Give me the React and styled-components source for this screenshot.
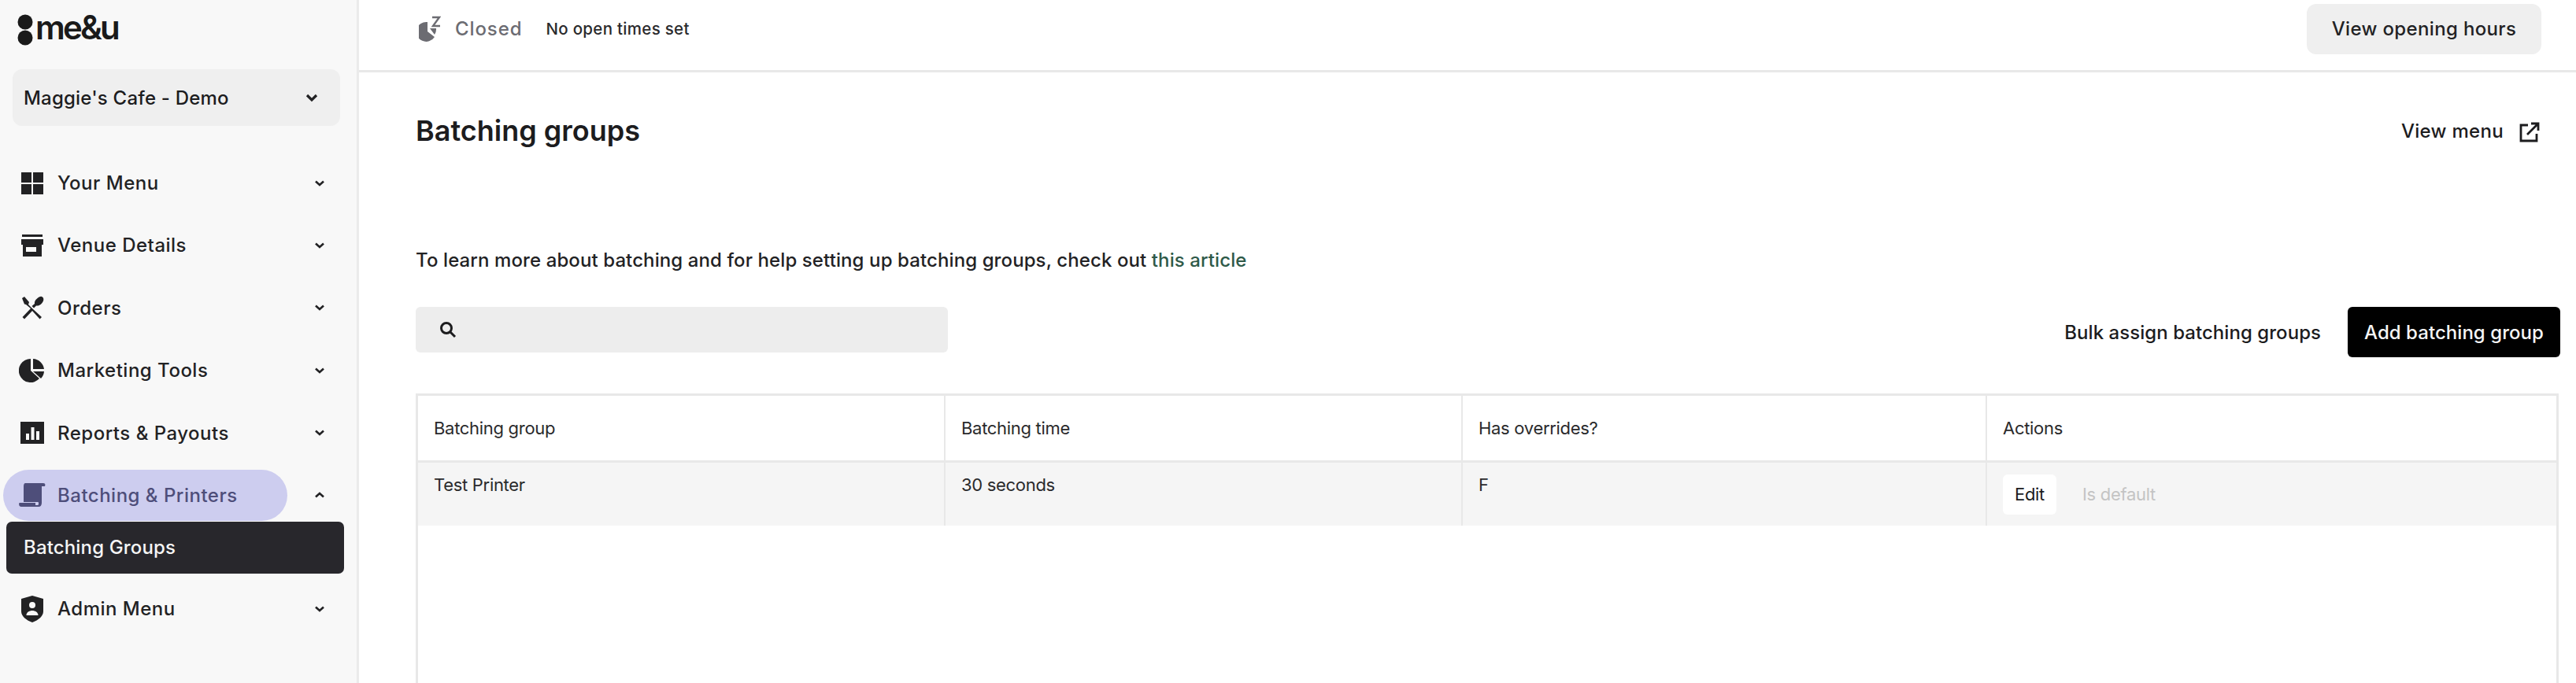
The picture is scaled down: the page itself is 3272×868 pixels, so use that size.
import React from "react";
import styled, { createGlobalStyle } from "styled-components";

const Global = createGlobalStyle`
  html, body { margin: 0; height: 100%; background: #fff; overflow: hidden; }
  body { font-family: Inter, "Noto Sans", sans-serif; color: #1c1c1e; }
  #root { height: 100%; }
  * { box-sizing: border-box; }
`;

const Page = styled.div`
  display: flex;
  width: 3272px;
  height: 868px;
  overflow: hidden;
`;

const Sidebar = styled.aside`
  width: 456px;
  flex-shrink: 0;
  background: #f8f8f8;
  border-right: 3px solid #ebebeb;
  padding: 18px 0 0;
`;

const Logo = styled.div`
  display: flex;
  align-items: center;
  gap: 3px;
  height: 40px;
  padding-left: 22px;
`;

const LogoText = styled.span`
  font-size: 42px;
  line-height: 40px;
  font-weight: 600;
  letter-spacing: -2.8px;
  color: #1a1a1a;
  margin-top: -6px;
`;

const VenueSelect = styled.div`
  display: flex;
  align-items: center;
  justify-content: space-between;
  height: 72px;
  margin: 30px 21px 0 16px;
  padding: 0 28px 0 14px;
  background: #efefef;
  border-radius: 12px;
  font-size: 24px;
  font-weight: 550;
  letter-spacing: 0.2px;
`;

const NavList = styled.nav`
  margin-top: 40px;
  display: flex;
  flex-direction: column;
  gap: 14.4px;
`;

const NavRow = styled.div`
  position: relative;
  display: flex;
  align-items: center;
  height: 65px;
  padding-left: 21px;
`;

const NavPill = styled.div`
  display: flex;
  align-items: center;
  gap: 15px;
  width: 361px;
  height: 65px;
  margin-left: -17px;
  padding-left: 20px;
  border-radius: 33px;
  background: ${(p) => (p.$active ? "#cdcdef" : "transparent")};
  color: ${(p) => (p.$active ? "#4e4e7a" : "#222224")};
  font-size: 24px;
  font-weight: 550;
  letter-spacing: 0.5px;
`;

const NavIcon = styled.svg`
  width: 34px;
  height: 34px;
  flex-shrink: 0;
  fill: currentColor;
`;

const NavChevron = styled.svg`
  width: 14px;
  height: 10px;
  margin-left: 34px;
  fill: none;
  stroke: #222224;
  stroke-width: 2.6;
`;

const SubItem = styled.div`
  display: flex;
  align-items: center;
  height: 66px;
  margin: -13.400px 16px -2px 8px;
  padding-left: 22px;
  background: #28272c;
  border-radius: 7px;
  color: #f5f5f5;
  font-size: 24px;
  font-weight: 500;
  letter-spacing: 0.15px;
`;

const Main = styled.main`
  flex: 1;
  display: flex;
  flex-direction: column;
  min-width: 0;
`;

const TopBar = styled.header`
  display: flex;
  align-items: center;
  flex-shrink: 0;
  height: 92px;
  padding: 4px 44px 20px 76px;
  border-bottom: 3px solid #e8e8e8;
`;

const ClosedText = styled.span`
  margin-left: 18px;
  font-size: 24px;
  font-weight: 450;
  letter-spacing: 0.9px;
  color: #6c6c72;
`;

const OpenTimes = styled.span`
  margin-left: 30px;
  font-size: 20.500px;
  font-weight: 450;
  letter-spacing: 0.3px;
  color: #2a2a2c;
`;

const GreyButton = styled.button`
  margin-left: auto;
  width: 298px;
  height: 64px;
  border: 0;
  border-radius: 12px;
  background: #efefef;
  color: #222224;
  font: 550 24px Inter, sans-serif;
  letter-spacing: 0.35px;
`;

const Content = styled.div`
  flex: 1;
  display: flex;
  flex-direction: column;
  padding: 0 20px 0 72px;
  min-height: 0;
`;

const TitleRow = styled.div`
  display: flex;
  align-items: center;
  justify-content: space-between;
  height: 50px;
  margin-top: 49px;
  padding-right: 26px;
`;

const Title = styled.h1`
  margin: 0;
  font-size: 36px;
  font-weight: 600;
  letter-spacing: 0;
  color: #1c1c1e;
`;

const ViewMenu = styled.a`
  display: flex;
  align-items: center;
  gap: 20px;
  font-size: 24px;
  font-weight: 550;
  letter-spacing: 0.3px;
`;

const MenuIcon = styled.svg`
  width: 26px;
  height: 26px;
  margin-top: 3px;
  fill: none;
  stroke: #1c1c1e;
  stroke-width: 2.8;
`;

const Intro = styled.p`
  margin: 123px 0 0;
  height: 34px;
  font-size: 24px;
  line-height: 34px;
  font-weight: 450;
  letter-spacing: 0.1px;
  color: #222224;
`;

const ArticleLink = styled.a`
  color: #2f5a49;
`;

const Toolbar = styled.div`
  display: flex;
  align-items: flex-start;
  margin-top: 42px;
  height: 64px;
`;

const Search = styled.label`
  display: flex;
  align-items: center;
  gap: 12px;
  width: 676px;
  height: 58px;
  padding-left: 30px;
  background: #ededed;
  border-radius: 6px;
`;

const SearchInput = styled.input`
  flex: 1;
  min-width: 0;
  height: 100%;
  border: 0;
  background: transparent;
  outline: none;
`;

const ToolbarActions = styled.div`
  display: flex;
  align-items: center;
  gap: 34px;
  height: 64px;
  margin-left: auto;
`;

const BulkLink = styled.span`
  font-size: 24px;
  font-weight: 450;
  letter-spacing: 0.05px;
  color: #1c1c1e;
`;

const AddButton = styled.button`
  width: 270px;
  height: 64px;
  border: 0;
  border-radius: 6px;
  background: #000;
  color: #f5f5f5;
  font: 450 24px Inter, sans-serif;
  letter-spacing: 0.05px;
`;

const TableFrame = styled.div`
  flex: 1;
  margin: 46px 2px 0 0;
  border: solid #e8e8e8;
  border-width: 3px 3px 0 3px;
  min-height: 0;
`;

const Table = styled.table`
  width: 100%;
  table-layout: fixed;
  border-collapse: collapse;
  font-size: 22px;
  letter-spacing: -0.3px;
  color: #2a2a2c;
`;

const Th = styled.th`
  height: 83px;
  padding: 0 20px;
  text-align: left;
  font-weight: 400;
  border-left: ${(p) => (p.$first ? "0" : "2px solid #e8e8e8")};
  border-bottom: 3px solid #e8e8e8;
`;

const Td = styled.td`
  height: 82px;
  padding: 15px 20px 0;
  vertical-align: top;
  background: #f5f5f5;
  border-left: ${(p) => (p.$first ? "0" : "2px solid #e8e8e8")};
`;

const Actions = styled.div`
  display: flex;
  align-items: center;
  gap: 33px;
`;

const EditButton = styled.button`
  width: 68px;
  height: 51px;
  border: 0;
  border-radius: 6px;
  background: #fff;
  color: #1c1c1e;
  font: 400 22px Inter, sans-serif;
  letter-spacing: -0.3px;
`;

const Muted = styled.span`
  color: #c4c4c4;
`;

const Chevron = ({ up }) => (
  <NavChevron viewBox="0 0 14 10">
    <path d={up ? "M2 7.5 7 3l5 4.5" : "M2 2.5 7 7l5-4.5"} />
  </NavChevron>
);

const icons = {
  menu: (
    <>
      <rect x="3" y="3" width="13" height="13" />
      <rect x="18" y="3" width="13" height="13" />
      <rect x="3" y="18" width="13" height="13" />
      <rect x="18" y="18" width="13" height="13" />
    </>
  ),
  venue: (
    <path
      fillRule="evenodd"
      d="M4 3h26v3H4zM3 9h28v7h-2v15H5V16H3zM9 19v6h13v-6z"
    />
  ),
  orders: (
    <path d="M4 5l3-2 6 7-1 3 5 5 12 11-2.5 2.5L17 21 7 31.500 4.500 29l10.500-11-6-5-2-.5zM29 3c3 1 3 5 .5 8s-5.500 4-7.500 3.500L19 17.500 16.500 15l3.500-3c-.5-2 .5-4.500 3-6.500S27 2.500 29 3z" />
  ),
  marketing: (
    <path d="M15 2v15l11 10A15 15 0 1 1 15 2zM18 2a15 15 0 0 1 14 13H18zM18 18h14a15 15 0 0 1-4 9z" />
  ),
  reports: (
    <path
      fillRule="evenodd"
      d="M2 3h30v28H2zM9 18v8h4v-8zM15.500 10v16h4V10zM22 15v11h4V15z"
    />
  ),
  batching: (
    <path d="M8 2h23c2 0 3 1.500 2 4h-4v21c0 3-1.500 5-4 5H3c-2.500 0-3.500-2-2.500-5H21v3h3c1 0 1-1 1-3 0-1-.5-1-1.500-1H6V6c0-2.500 1-4 2-4z" />
  ),
  admin: (
    <path
      fillRule="evenodd"
      d="M17 0l14 4v16c0 6-6 11-14 14C9 31 3 26 3 20V4zM17 8a4 4 0 1 0 0 8 4 4 0 0 0 0-8zM9.500 25h15c0-4-4-6-7.500-6s-7.500 2-7.500 6z"
    />
  ),
};

const navItems = [
  { key: "menu", label: "Your Menu" },
  { key: "venue", label: "Venue Details" },
  { key: "orders", label: "Orders" },
  { key: "marketing", label: "Marketing Tools" },
  { key: "reports", label: "Reports & Payouts" },
  { key: "batching", label: "Batching & Printers", active: true },
];

const NavItem = ({ item }) => (
  <NavRow>
    <NavPill $active={item.active}>
      <NavIcon viewBox="0 0 34 34">{icons[item.key]}</NavIcon>
      {item.label}
    </NavPill>
    <Chevron up={item.active} />
  </NavRow>
);

export default function App() {
  return (
    <Page>
      <Global />
      <Sidebar>
        <Logo>
          <svg width="20" height="40" viewBox="0 0 20 40">
            <circle cx="10" cy="10" r="9.500" fill="#1a1a1a" />
            <circle cx="10" cy="30" r="9.500" fill="#1a1a1a" />
          </svg>
          <LogoText>me&amp;u</LogoText>
        </Logo>
        <VenueSelect>
          Maggie's Cafe - Demo
          <svg width="16" height="12" viewBox="0 0 16 12" fill="none" stroke="#222224" strokeWidth="3.200">
            <path d="M2 3l6 6 6-6" />
          </svg>
        </VenueSelect>
        <NavList>
          {navItems.map((item) => (
            <NavItem key={item.key} item={item} />
          ))}
          <SubItem>Batching Groups</SubItem>
          <NavItem item={{ key: "admin", label: "Admin Menu" }} />
        </NavList>
      </Sidebar>
      <Main>
        <TopBar>
          <svg width="28" height="34" viewBox="0 0 28 34">
            <path fill="#6c6c72" d="M11 8v12l9 7a12.500 12.500 0 1 1-9-19zM14 16h8a12 12 0 0 1-2 8z" />
            <path fill="none" stroke="#6c6c72" strokeWidth="2.400" d="M17 2h9l-8 11h9" />
          </svg>
          <ClosedText>Closed</ClosedText>
          <OpenTimes>No open times set</OpenTimes>
          <GreyButton>View opening hours</GreyButton>
        </TopBar>
        <Content>
          <TitleRow>
            <Title>Batching groups</Title>
            <ViewMenu>
              View menu
              <MenuIcon viewBox="0 0 26 26">
                <path d="M11 4H2v20h20v-9M15 2h9v9M24 2 10 16" />
              </MenuIcon>
            </ViewMenu>
          </TitleRow>
          <Intro>
            To learn more about batching and for help setting up batching groups, check out{" "}
            <ArticleLink>this article</ArticleLink>
          </Intro>
          <Toolbar>
            <Search>
              <svg width="22" height="22" viewBox="0 0 22 22" fill="none" stroke="#1c1c1e" strokeWidth="3">
                <circle cx="9" cy="9" r="6.500" />
                <path d="M14 14l6 6" />
              </svg>
              <SearchInput />
            </Search>
            <ToolbarActions>
              <BulkLink>Bulk assign batching groups</BulkLink>
              <AddButton>Add batching group</AddButton>
            </ToolbarActions>
          </Toolbar>
          <TableFrame>
            <Table>
              <colgroup>
                <col width="669" />
                <col width="657" />
                <col width="666" />
                <col />
              </colgroup>
              <thead>
                <tr>
                  <Th $first>Batching group</Th>
                  <Th>Batching time</Th>
                  <Th>Has overrides?</Th>
                  <Th>Actions</Th>
                </tr>
              </thead>
              <tbody>
                <tr>
                  <Td $first>Test Printer</Td>
                  <Td>30 seconds</Td>
                  <Td>F</Td>
                  <Td>
                    <Actions>
                      <EditButton>Edit</EditButton>
                      <Muted>Is default</Muted>
                    </Actions>
                  </Td>
                </tr>
              </tbody>
            </Table>
          </TableFrame>
        </Content>
      </Main>
    </Page>
  );
}
